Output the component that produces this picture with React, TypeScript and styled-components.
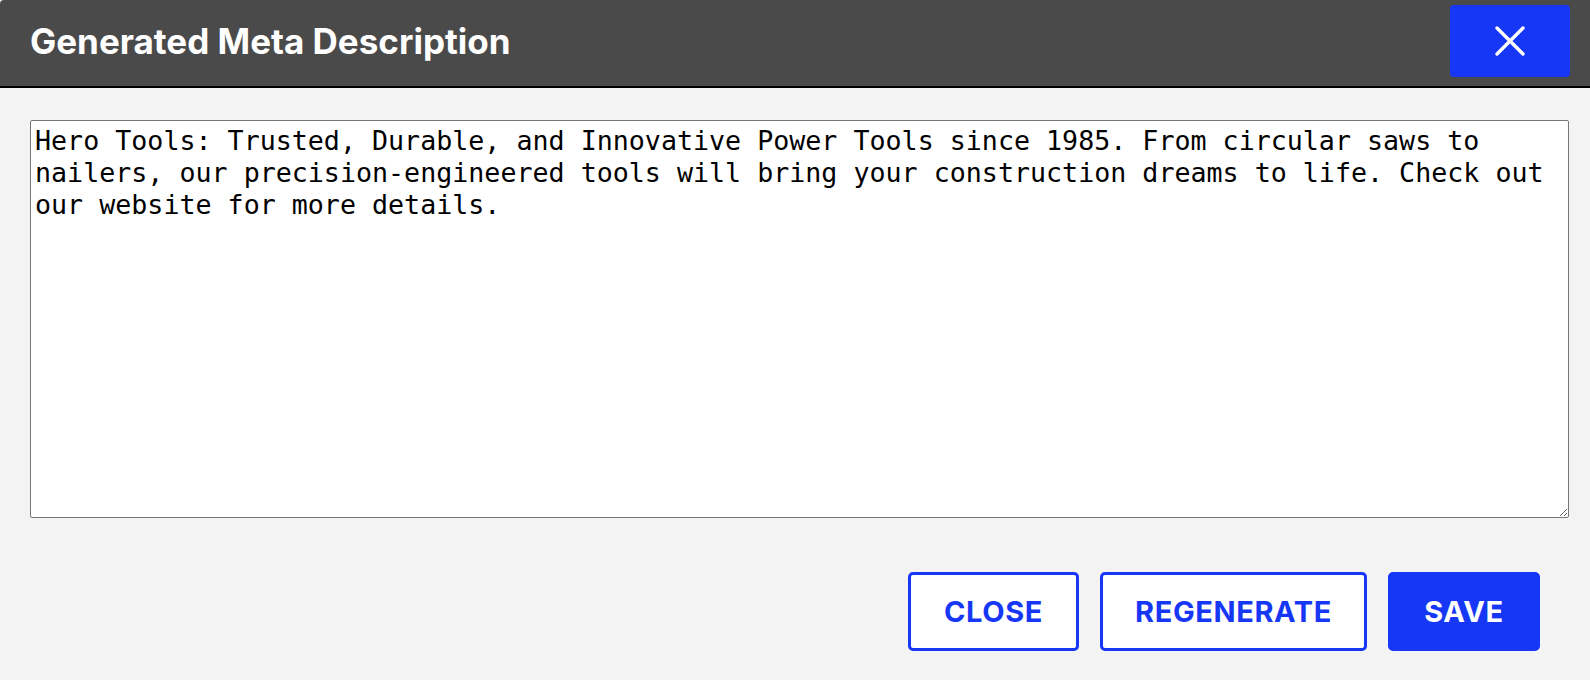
import React from "react";
import styled, { createGlobalStyle } from "styled-components";

const GlobalStyle = createGlobalStyle`
  html, body {
    margin: 0;
    padding: 0;
    background: #f3f3f3;
  }
  * {
    box-sizing: border-box;
  }
`;

const Dialog = styled.div`
  width: 100%;
  min-height: 100vh;
  background: #f3f3f3;
  font-family: Inter, "Liberation Sans", sans-serif;
`;

const Header = styled.div`
  height: 88px;
  display: flex;
  align-items: flex-start;
  justify-content: space-between;
  padding: 0 20px 0 30px;
  background: #4a4a4a;
  border-bottom: 2px solid #000;
  border-top-left-radius: 4px;
`;

const Title = styled.h1`
  margin: 0;
  padding-top: 20px;
  font-size: 35px;
  font-weight: 700;
  line-height: 42px;
  color: #fff;
`;

const IconButton = styled.button`
  margin-top: 5px;
  width: 120px;
  height: 72px;
  display: flex;
  align-items: center;
  justify-content: center;
  background: #1637f5;
  border: none;
  border-radius: 4px;
  padding: 0;
  cursor: pointer;
`;

const Body = styled.div`
  padding: 32px 21px 0 30px;
`;

const TextArea = styled.textarea`
  display: block;
  width: 100%;
  height: 398px;
  margin: 0;
  padding: 4px 3px 2px 4px;
  border: 1px solid #767676;
  border-radius: 2px;
  background: #fff;
  color: #000;
  font-family: "DejaVu Sans Mono", monospace;
  font-size: 26.67px;
  line-height: 32px;
  resize: both;
  outline: none;
`;

const Footer = styled.div`
  display: flex;
  justify-content: flex-end;
  gap: 21px;
  margin-top: 54px;
  padding-right: 29px;
`;

const ActionButton = styled.button<{ $primary?: boolean; $width: number }>`
  width: ${({ $width }) => $width}px;
  height: 79px;
  border-radius: 5px;
  border: 3px solid #1637f5;
  background: ${({ $primary }) => ($primary ? "#1637f5" : "#fff")};
  color: ${({ $primary }) => ($primary ? "#fff" : "#1637f5")};
  font-family: Inter, "Liberation Sans", sans-serif;
  font-size: 29px;
  font-weight: 700;
  letter-spacing: 0.6px;
  text-transform: uppercase;
  cursor: pointer;
`;

const CloseIcon = () => (
  <svg width="30" height="30" viewBox="0 0 30 30" fill="none">
    <path
      d="M2 2 L28 28 M28 2 L2 28"
      stroke="#fff"
      strokeWidth="3.4"
      strokeLinecap="round"
    />
  </svg>
);

const text =
  "Hero Tools: Trusted, Durable, and Innovative Power Tools since 1985. From circular saws to nailers, our precision-engineered tools will bring your construction dreams to life. Check out our website for more details.";

export default function App() {
  return (
    <Dialog>
      <GlobalStyle />
      <Header>
        <Title>Generated Meta Description</Title>
        <IconButton aria-label="Close">
          <CloseIcon />
        </IconButton>
      </Header>
      <Body>
        <TextArea defaultValue={text} spellCheck={false} />
        <Footer>
          <ActionButton $width={171}>Close</ActionButton>
          <ActionButton $width={267}>Regenerate</ActionButton>
          <ActionButton $width={152} $primary>
            Save
          </ActionButton>
        </Footer>
      </Body>
    </Dialog>
  );
}
